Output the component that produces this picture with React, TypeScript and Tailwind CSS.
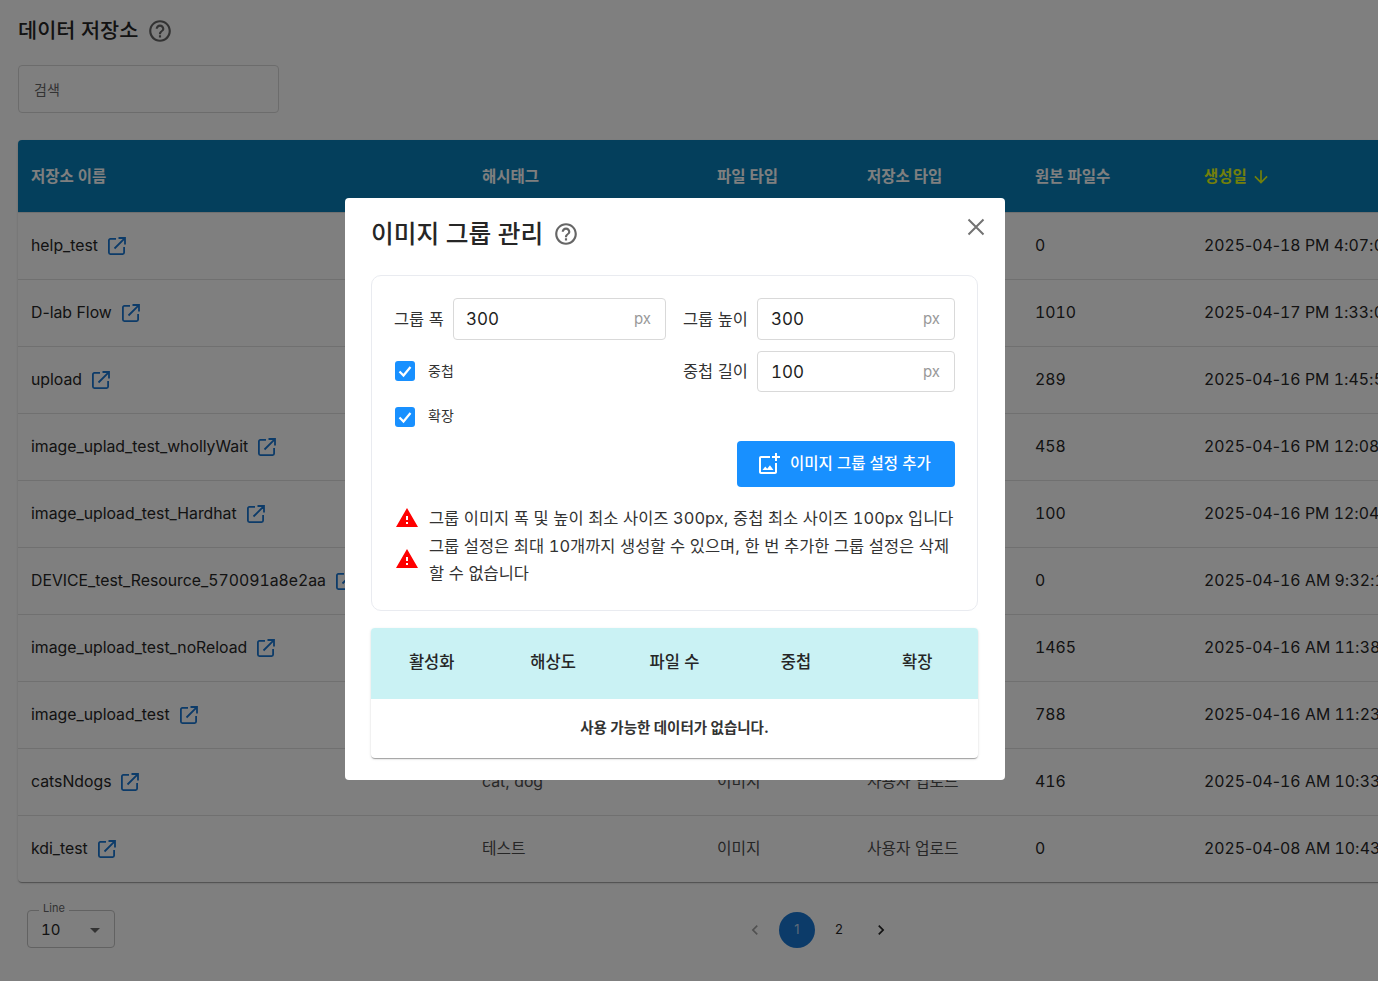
const HELP_PATH =
  "M11 18h2v-2h-2v2zm1-16C6.48 2 2 6.48 2 12s4.48 10 10 10 10-4.48 10-10S17.52 2 12 2zm0 18c-4.41 0-8-3.59-8-8s3.59-8 8-8 8 3.59 8 8-3.59 8-8 8zm0-14c-2.21 0-4 1.79-4 4h2c0-1.1.9-2 2-2s2 .9 2 2c0 2-3 1.75-3 5h2c0-2.25 3-2.5 3-5 0-2.21-1.79-4-4-4z";

const rows = [
  { name: "help_test", tag: "", type: "이미지", source: "사용자 업로드", count: "0", date: "2025-04-18 PM 4:07:03" },
  { name: "D-lab Flow", tag: "", type: "이미지", source: "사용자 업로드", count: "1010", date: "2025-04-17 PM 1:33:05" },
  { name: "upload", tag: "", type: "이미지", source: "사용자 업로드", count: "289", date: "2025-04-16 PM 1:45:51" },
  { name: "image_uplad_test_whollyWait", tag: "", type: "이미지", source: "사용자 업로드", count: "458", date: "2025-04-16 PM 12:08:10" },
  { name: "image_upload_test_Hardhat", tag: "", type: "이미지", source: "사용자 업로드", count: "100", date: "2025-04-16 PM 12:04:22" },
  { name: "DEVICE_test_Resource_570091a8e2aa", tag: "", type: "이미지", source: "사용자 업로드", count: "0", date: "2025-04-16 AM 9:32:14" },
  { name: "image_upload_test_noReload", tag: "", type: "이미지", source: "사용자 업로드", count: "1465", date: "2025-04-16 AM 11:38:02" },
  { name: "image_upload_test", tag: "", type: "이미지", source: "사용자 업로드", count: "788", date: "2025-04-16 AM 11:23:40" },
  { name: "catsNdogs", tag: "cat, dog", type: "이미지", source: "사용자 업로드", count: "416", date: "2025-04-16 AM 10:33:18" },
  { name: "kdi_test", tag: "테스트", type: "이미지", source: "사용자 업로드", count: "0", date: "2025-04-08 AM 10:43:27" },
];

const columns = "grid grid-cols-[451px_235px_150px_168px_169px_1fr] items-center";

// digits are tabular in the original, hyphens and colons are not
function Digits({ text }: { text: string }) {
  return (
    <>
      {text.split(/(\d+)/).map((part, i) =>
        /\d/.test(part) ? (
          <span key={i} className="tabular-nums">
            {part}
          </span>
        ) : (
          part
        )
      )}
    </>
  );
}

function HelpIcon({ className }: { className: string }) {
  return (
    <svg viewBox="0 0 24 24" fill="currentColor" className={className}>
      <path d={HELP_PATH} />
    </svg>
  );
}

function LinkIcon() {
  return (
    <svg viewBox="0 0 18 18" fill="none" stroke="#1976d2" strokeWidth="1.8" className="ml-[10px] h-[18px] w-[18px] shrink-0">
      <path d="M8 1.9H2.4a1.5 1.5 0 0 0-1.5 1.5v12.2a1.5 1.5 0 0 0 1.5 1.5h12.2a1.5 1.5 0 0 0 1.5-1.5V10" />
      <path d="M6.5 11.5 16.4 1.6M10.5 1h6.5v6.5" />
    </svg>
  );
}

function WarningIcon() {
  return (
    <svg viewBox="0 0 24 24" fill="#ff0000" className="mb-[1.5px] h-6 w-6 shrink-0">
      <path d="M1 21h22L12 2 1 21zm12-3h-2v-2h2v2zm0-4h-2v-4h2v4z" />
    </svg>
  );
}

function Checkbox({ label }: { label: string }) {
  return (
    <div className="flex items-center gap-[13px] pl-px">
      <span className="flex h-5 w-5 items-center justify-center rounded-[3px] bg-[#1890ff]">
        <svg viewBox="0 0 20 20" fill="none" stroke="white" strokeWidth="2.2" className="h-5 w-5">
          <path d="M4.5 10.5 8.5 14.5 15.5 6" />
        </svg>
      </span>
      <span className="pb-[2px] text-[14px] text-[#333333]">{label}</span>
    </div>
  );
}

function SizeInput({ value, className }: { value: string; className: string }) {
  return (
    <div className={`flex items-center justify-between rounded-[4px] border border-[#d9d9d9] pr-[14px] ${className}`}>
      <span className="pt-px text-[17px] tabular-nums text-[#1f1f1f]">{value}</span>
      <span className="text-[15px] text-[#999999]">px</span>
    </div>
  );
}

function ImageGroupModal() {
  return (
    <div className="absolute left-[345px] top-[198px] flex h-[582px] w-[660px] flex-col rounded-[4px] bg-white px-[26px] pt-[16px]">
      <div className="flex items-center justify-between">
        <div className="flex items-center gap-[10px]">
          <h2 className="pt-px text-[24.7px] font-medium leading-[38px] text-[#262626]">이미지 그룹 관리</h2>
          <HelpIcon className="mt-[1px] h-[26px] w-[26px] text-[#666666]" />
        </div>
        <svg viewBox="0 0 18 18" fill="none" stroke="#737373" strokeWidth="2" className="mb-[14px] mr-[-6px] h-[18px] w-[18px]">
          <path d="M1.5 1.5 16.5 16.5M16.5 1.5 1.5 16.5" />
        </svg>
      </div>

      <div className="mr-[1px] mt-[22px] h-[336px] rounded-[10px] border border-[#e9ebf0] px-[22px] pt-[22px]">
        <div className="flex items-center">
          <span className="mr-[9px] w-[50px] whitespace-nowrap text-[16.4px] text-[#333333]">그룹 폭</span>
          <SizeInput value="300" className="h-[42px] w-[213px] pl-[12px]" />
          <span className="ml-[17px] mr-[9px] w-[65px] whitespace-nowrap text-[16.4px] text-[#333333]">그룹 높이</span>
          <SizeInput value="300" className="h-[42px] w-[198px] pl-[13px]" />
        </div>
        <div className="mt-[11px] flex items-center justify-between">
          <div className="mb-px">
            <Checkbox label="중첩" />
          </div>
          <div className="flex items-center">
            <span className="mr-[9px] w-[65px] whitespace-nowrap text-[16.4px] text-[#333333]">중첩 길이</span>
            <SizeInput value="100" className="h-[41px] w-[198px] pl-[13px] pt-px" />
          </div>
        </div>
        <div className="mt-[13px]">
          <Checkbox label="확장" />
        </div>
        <div className="mt-[13px] flex justify-end">
          <button className="flex h-[46px] w-[218px] items-center gap-[9px] whitespace-nowrap rounded-[4px] bg-[#1890ff] pl-[20px] text-[15.5px] font-medium text-white">
            <svg viewBox="0 0 24 24" fill="white" className="h-6 w-6">
              <path d="M18 20H4V6h9V4H4c-1.1 0-2 .9-2 2v14c0 1.1.9 2 2 2h14c1.1 0 2-.9 2-2v-9h-2v9zm-7.79-3.17l-1.96-2.36L5.5 18h11l-3.54-4.71zM20 4V1h-2v3h-3c.01.01 0 2 0 2h3v2.99c.01.01 2 0 2 0V6h3V4h-3z" />
            </svg>
            이미지 그룹 설정 추가
          </button>
        </div>
        <div className="mt-[18px] flex flex-col text-[16.45px] leading-[27.5px] text-[#333333]">
          <div className="flex items-center gap-[10px] pl-px">
            <WarningIcon />
            <p className="whitespace-nowrap">
              <Digits text="그룹 이미지 폭 및 높이 최소 사이즈 300px, 중첩 최소 사이즈 100px 입니다" />
            </p>
          </div>
          <div className="flex items-center gap-[10px] pl-px">
            <WarningIcon />
            <p>
              <Digits text="그룹 설정은 최대 10개까지 생성할 수 있으며, 한 번 추가한 그룹 설정은 삭제 할 수 없습니다" />
            </p>
          </div>
        </div>
      </div>

      <div className="mr-[1px] mt-[17px] overflow-hidden rounded-[4px] shadow-[0_2px_1px_-1px_rgba(0,0,0,0.2),0_1px_1px_0_rgba(0,0,0,0.14),0_1px_3px_0_rgba(0,0,0,0.12)]">
        <div className="grid h-[71px] grid-cols-5 items-center bg-[#caf2f4] pb-[2px] text-center text-[16.5px] font-medium text-[#262626]">
          <span>활성화</span>
          <span>해상도</span>
          <span>파일 수</span>
          <span>중첩</span>
          <span>확장</span>
        </div>
        <div className="flex h-[59px] items-center justify-center pb-[2px] text-[14.5px] font-bold text-[#333333]">
          사용 가능한 데이터가 없습니다.
        </div>
      </div>
    </div>
  );
}

export default function App() {
  return (
    <div className="relative h-screen overflow-hidden bg-white font-['Inter','Noto_Sans_CJK_KR',sans-serif]">
      <div className="pl-[18px] pt-[13px]">
        <div className="flex h-[35px] items-center gap-[9px]">
          <h1 className="text-[20.8px] font-medium text-[#262626]">데이터 저장소</h1>
          <HelpIcon className="h-[26px] w-[26px] text-[#666666]" />
        </div>
        <div className="mt-[17px] flex h-[48px] w-[261px] items-center rounded-[4px] border border-[#d9d9d9] pl-[15px] text-[14px] text-[#666666]">
          검색
        </div>

        <div className="mt-[27px] w-[1500px] overflow-hidden rounded-[4px] shadow-[0_2px_1px_-1px_rgba(0,0,0,0.2),0_1px_1px_0_rgba(0,0,0,0.14),0_1px_3px_0_rgba(0,0,0,0.12)]">
          <div className={`${columns} h-[72px] bg-[#087fb8] pl-[13px] pt-px text-[15.5px] font-semibold text-white`}>
            <span>저장소 이름</span>
            <span>해시태그</span>
            <span>파일 타입</span>
            <span>저장소 타입</span>
            <span>원본 파일수</span>
            <span className="flex items-center gap-[4px] text-[#e6ff14]">
              생성일
              <svg viewBox="0 0 24 24" fill="currentColor" className="h-5 w-5">
                <path d="m20 12-1.41-1.41L13 16.17V4h-2v12.17l-5.58-5.59L4 12l8 8 8-8z" />
              </svg>
            </span>
          </div>
          {rows.map((row) => (
            <div key={row.name} className={`${columns} h-[67px] border-t border-[#e0e0e0] pl-[13px] text-[15.8px] text-[#262626] first:border-t-transparent`}>
              <span className="flex items-center">
                <span>
                  <Digits text={row.name} />
                </span>
                <LinkIcon />
              </span>
              <span className="text-[#4d4d4d]">{row.tag}</span>
              <span className="text-[#4d4d4d]">{row.type}</span>
              <span className="text-[#4d4d4d]">{row.source}</span>
              <span className="tabular-nums">{row.count}</span>
              <span className="whitespace-nowrap">
                <Digits text={row.date} />
              </span>
            </div>
          ))}
        </div>
      </div>

      <div className="ml-[27px] mt-[28px] flex items-start">
        <div className="relative flex h-[38px] w-[88px] items-center justify-between rounded-[4px] border border-[#c4c4c4] pl-[13px] pr-[14px] pt-[2px] text-[15px] tabular-nums text-[#262626]">
          <span className="absolute left-[11px] top-[-10px] bg-white px-[4px] text-[11px] leading-[14px] text-[#666666]">Line</span>
          10
          <span className="h-0 w-0 border-x-[5px] border-t-[5px] border-x-transparent border-t-[#666666]" />
        </div>
        <div className="ml-[622px] mt-[2px] flex items-center gap-[6px] text-[13px] text-[#262626]">
          <span className="flex h-9 w-9 items-center justify-center">
            <svg viewBox="0 0 24 24" fill="#a3a3a3" className="h-5 w-5">
              <path d="M15.41 7.41 14 6l-6 6 6 6 1.41-1.41L10.83 12z" />
            </svg>
          </span>
          <span className="flex h-9 w-9 items-center justify-center rounded-full bg-[#1976d2] text-white/70">1</span>
          <span className="flex h-9 w-9 items-center justify-center">2</span>
          <span className="flex h-9 w-9 items-center justify-center">
            <svg viewBox="0 0 24 24" fill="#262626" className="h-5 w-5">
              <path d="M10 6 8.59 7.41 13.17 12l-4.58 4.59L10 18l6-6z" />
            </svg>
          </span>
        </div>
      </div>

      <div className="absolute inset-0 bg-black/50" />
      <ImageGroupModal />
    </div>
  );
}
